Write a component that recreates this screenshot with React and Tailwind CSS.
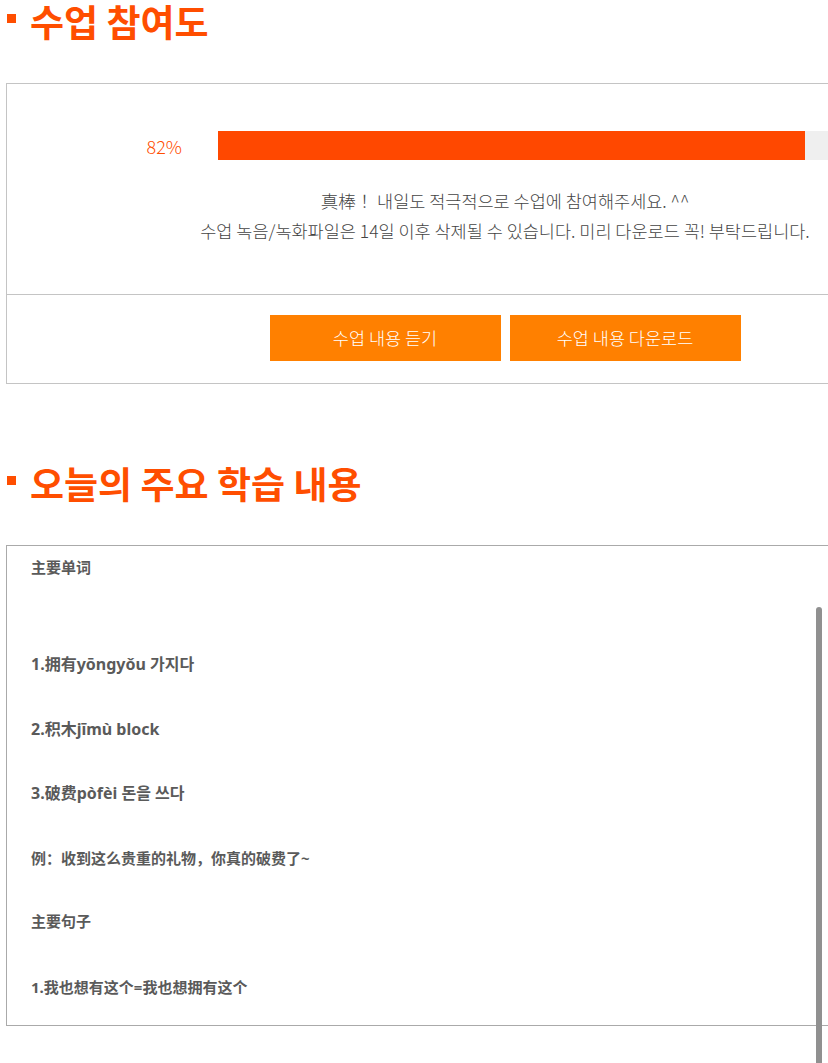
import React from "react";

function Heading({ children, className = "" }) {
  return (
    <div className={`flex h-[43px] items-center ${className}`}>
      <span className="ml-[7px] mb-[6px] h-[9px] w-[9px] shrink-0 bg-[#ff4e00]" />
      <span className="ml-[14px] whitespace-nowrap text-[37px] font-bold leading-[43px] text-[#ff4e00] font-['Noto_Sans_CJK_KR','Noto_Sans',sans-serif]">
        {children}
      </span>
    </div>
  );
}

export default function App() {
  const pct = 82;
  return (
    <div className="relative h-[1063px] w-[828px] overflow-hidden bg-white font-['Noto_Sans_CJK_KR','Noto_Sans',sans-serif]">
      <Heading>수업 참여도</Heading>

      <div className="ml-[6px] mt-[40px] w-[998px] border border-[#c4c4c4]">
        <div className="h-[211px] border-b border-[#c4c4c4]">
          <div className="flex items-center pt-[47px]">
            <div className="w-[175px] text-right text-[18px] font-light leading-none text-[#ff4e00]">
              {pct}%
            </div>
            <div className="ml-[36px] h-[29px] w-[716px] bg-[#efefef]">
              <div className="h-full bg-[#ff4800]" style={{ width: `${pct}%` }} />
            </div>
          </div>
          <div className="mt-[26px] whitespace-nowrap text-center text-[17.5px] font-light leading-[30px] text-[#444]">
            <p>真棒！ 내일도 적극적으로 수업에 참여해주세요. ^^</p>
            <p>수업 녹음/녹화파일은 14일 이후 삭제될 수 있습니다. 미리 다운로드 꼭! 부탁드립니다.</p>
          </div>
        </div>
        <div className="flex h-[88px] items-start justify-center gap-[9px] pt-[20px]">
          <button className="h-[46px] w-[231px] bg-[#ff8000] text-[17.5px] font-light text-white">
            수업 내용 듣기
          </button>
          <button className="h-[46px] w-[231px] bg-[#ff8000] text-[17.5px] font-light text-white">
            수업 내용 다운로드
          </button>
        </div>
      </div>

      <Heading className="mt-[78px]">오늘의 주요 학습 내용</Heading>

      <div className="ml-[6px] mt-[40px] h-[481px] w-[998px] border border-[#aaaaaa] pl-[24px] pt-[6px] font-bold leading-[30px] text-[#5a5a5a] font-['Noto_Sans','Noto_Sans_CJK_SC',sans-serif]">
        <p className="text-[15px]">主要单词</p>
        <p className="mt-[67px] text-[16px]">1.拥有yōngyǒu 가지다</p>
        <p className="mt-[35px] text-[16px]">2.积木jīmù block</p>
        <p className="mt-[34px] text-[16px]">3.破费pòfèi 돈을 쓰다</p>
        <p className="mt-[35px] text-[15px]">例：收到这么贵重的礼物，你真的破费了~</p>
        <p className="mt-[33px] text-[15px]">主要句子</p>
        <p className="mt-[36px] text-[15px]">1.我也想有这个=我也想拥有这个</p>
      </div>

      <div className="absolute left-[816px] top-[607px] h-[470px] w-[6px] rounded-t-full bg-[#909090]" />
    </div>
  );
}
